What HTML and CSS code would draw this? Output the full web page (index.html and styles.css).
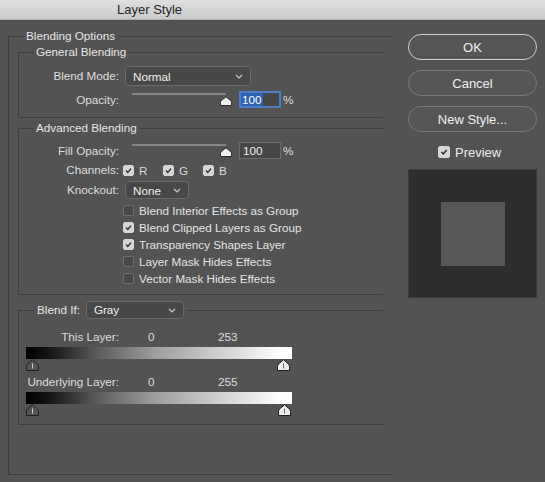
FILE: index.html
```html
<!DOCTYPE html>
<html lang="en">
<head>
    <meta charset="UTF-8">
    <title>Layer Style</title>
    <link rel="stylesheet" href="styles.css">
</head>
<body>
    <div class="titlebar"><span class="title">Layer Style</span></div>

    <div class="dialog">
        <fieldset class="group outer">
            <legend>Blending Options</legend>

            <fieldset class="group inner general">
                <legend>General Blending</legend>
                <div class="form">
                    <span class="lbl">Blend Mode:</span>
                    <div class="select mode">
                        <span>Normal</span>
                        <svg class="chev" width="8" height="5" viewBox="0 0 8 5"><path d="M1 1 L4 4 L7 1"/></svg>
                    </div>

                    <span class="lbl">Opacity:</span>
                    <div class="slider-row">
                        <div class="slider">
                            <div class="track"></div>
                            <svg class="knob" width="12" height="10" viewBox="0 0 12 10"><path d="M0.5 9.5 V6.5 Q0.5 5 2 4 L6 0.8 L10 4 Q11.5 5 11.5 6.5 V9.5 Z"/></svg>
                        </div>
                        <div class="num focused"><span class="sel">100</span></div>
                        <span class="pct">%</span>
                    </div>
                </div>
            </fieldset>

            <fieldset class="group inner advanced">
                <legend>Advanced Blending</legend>
                <div class="form">
                    <span class="lbl">Fill Opacity:</span>
                    <div class="slider-row">
                        <div class="slider">
                            <div class="track"></div>
                            <svg class="knob" width="12" height="10" viewBox="0 0 12 10"><path d="M0.5 9.5 V6.5 Q0.5 5 2 4 L6 0.8 L10 4 Q11.5 5 11.5 6.5 V9.5 Z"/></svg>
                        </div>
                        <div class="num">100</div>
                        <span class="pct">%</span>
                    </div>

                    <span class="lbl">Channels:</span>
                    <div class="channels">
                        <label class="chan"><span class="cb on"><svg width="11" height="11" viewBox="0 0 11 11"><path d="M2.5 5.5 L4.6 7.8 L8.6 3.2"/></svg></span>R</label>
                        <label class="chan"><span class="cb on"><svg width="11" height="11" viewBox="0 0 11 11"><path d="M2.5 5.5 L4.6 7.8 L8.6 3.2"/></svg></span>G</label>
                        <label class="chan"><span class="cb on"><svg width="11" height="11" viewBox="0 0 11 11"><path d="M2.5 5.5 L4.6 7.8 L8.6 3.2"/></svg></span>B</label>
                    </div>

                    <span class="lbl">Knockout:</span>
                    <div class="select knockout">
                        <span>None</span>
                        <svg class="chev" width="8" height="5" viewBox="0 0 8 5"><path d="M1 1 L4 4 L7 1"/></svg>
                    </div>

                    <div class="checks">
                        <label class="check"><span class="cb"></span>Blend Interior Effects as Group</label>
                        <label class="check"><span class="cb on"><svg width="11" height="11" viewBox="0 0 11 11"><path d="M2.5 5.5 L4.6 7.8 L8.6 3.2"/></svg></span>Blend Clipped Layers as Group</label>
                        <label class="check"><span class="cb on"><svg width="11" height="11" viewBox="0 0 11 11"><path d="M2.5 5.5 L4.6 7.8 L8.6 3.2"/></svg></span>Transparency Shapes Layer</label>
                        <label class="check"><span class="cb"></span>Layer Mask Hides Effects</label>
                        <label class="check"><span class="cb"></span>Vector Mask Hides Effects</label>
                    </div>
                </div>
            </fieldset>

            <fieldset class="group inner blendif">
                <legend>
                    <span>Blend If:</span>
                    <div class="select gray">
                        <span>Gray</span>
                        <svg class="chev" width="8" height="5" viewBox="0 0 8 5"><path d="M1 1 L4 4 L7 1"/></svg>
                    </div>
                </legend>

                <div class="range-row">
                    <span class="lbl">This Layer:</span>
                    <span class="val">0</span>
                    <span class="val">253</span>
                </div>
                <div class="ramp"></div>
                <div class="thumbs">
                    <svg class="thumb dark" width="13" height="12" viewBox="0 0 13 12"><path class="shape" d="M0.5 11.5 V7.5 Q0.5 5.8 2.2 4.5 L6.5 0.8 L10.8 4.5 Q12.5 5.8 12.5 7.5 V11.5 Z"/><path class="tick" d="M6.5 4.5 V9.5"/></svg>
                    <svg class="thumb light" style="margin-right: 2px" width="13" height="12" viewBox="0 0 13 12"><path class="shape" d="M0.5 11.5 V7.5 Q0.5 5.8 2.2 4.5 L6.5 0.8 L10.8 4.5 Q12.5 5.8 12.5 7.5 V11.5 Z"/><path class="tick" d="M6.5 4.5 V9.5"/></svg>
                </div>

                <div class="range-row second">
                    <span class="lbl">Underlying Layer:</span>
                    <span class="val">0</span>
                    <span class="val">255</span>
                </div>
                <div class="ramp"></div>
                <div class="thumbs">
                    <svg class="thumb dark" width="13" height="12" viewBox="0 0 13 12"><path class="shape" d="M0.5 11.5 V7.5 Q0.5 5.8 2.2 4.5 L6.5 0.8 L10.8 4.5 Q12.5 5.8 12.5 7.5 V11.5 Z"/><path class="tick" d="M6.5 4.5 V9.5"/></svg>
                    <svg class="thumb light" style="margin-right: 1px" width="13" height="12" viewBox="0 0 13 12"><path class="shape" d="M0.5 11.5 V7.5 Q0.5 5.8 2.2 4.5 L6.5 0.8 L10.8 4.5 Q12.5 5.8 12.5 7.5 V11.5 Z"/><path class="tick" d="M6.5 4.5 V9.5"/></svg>
                </div>
            </fieldset>
        </fieldset>

        <div class="side">
            <button class="btn default">OK</button>
            <button class="btn">Cancel</button>
            <button class="btn">New Style...</button>

            <label class="preview-toggle">
                <span class="cb on big"><svg width="12" height="12" viewBox="0 0 12 12"><path d="M3 6 L5.1 8.4 L9.2 3.6"/></svg></span>Preview
            </label>

            <div class="preview">
                <div class="swatch"></div>
            </div>
        </div>
    </div>
</body>
</html>
```

FILE: styles.css
```css
* {
    box-sizing: border-box;
}
body {
    margin: 0;
    width: 545px;
    height: 482px;
    overflow: hidden;
    background: #535353;
    font-family: "Liberation Sans", Arial, sans-serif;
    font-size: 11.7px;
    color: #dedede;
}
.titlebar {
    height: 20px;
    background: linear-gradient(#dfdfdf, #cbcbcb);
    border-bottom: 1px solid #b0b0b0;
    color: #262626;
    font-size: 13px;
    line-height: 19px;
    padding-left: 117px;
}
.dialog {
    display: flex;
    align-items: flex-start;
}

/* group boxes */
.group {
    margin: 0;
    padding: 0;
    min-width: 0;
    border: 1px solid #3d3d3d;
    border-right: none;
}
.group > legend {
    padding: 0 3px;
    margin-left: 14px;
    line-height: 14px;
    color: #e6e6e6;
}
.outer {
    width: 385px;
    margin: 9px 0 0 8px;
    padding-bottom: 49px;
}
.inner {
    margin: 0 10px 0 9px;
}
.general {
    margin-top: 2px;
    padding: 7px 0 9px;
}
.advanced {
    margin-top: 3px;
    padding: 7px 0 7px;
}
.blendif {
    margin-top: 6px;
    padding: 11px 0 8px;
}

/* form grid */
.form {
    display: grid;
    grid-template-columns: 100px 1fr;
    column-gap: 4px;
    row-gap: 3px;
    align-items: center;
}
.general .form {
    row-gap: 5px;
}
.lbl {
    text-align: right;
    line-height: 14px;
}

/* dropdowns */
.select {
    display: flex;
    align-items: center;
    justify-content: space-between;
    margin-left: 2px;
    padding: 0 7px 0 7px;
    background: #474747;
    border: 1px solid #6a6a6a;
    border-radius: 4px;
    color: #f0f0f0;
}
.select.mode {
    width: 126px;
    height: 20px;
}
.select.knockout {
    width: 64px;
    height: 18px;
}
.select.gray {
    width: 98px;
    height: 18px;
    margin-left: 6px;
}
.chev {
    fill: none;
    stroke: #cfcfcf;
    stroke-width: 1.1;
}

/* sliders */
.slider-row {
    display: flex;
    align-items: flex-start;
    height: 17px;
}
.slider {
    position: relative;
    width: 94px;
    height: 17px;
    margin-left: 9px;
}
.track {
    margin-top: 2px;
    height: 2px;
    background: #858585;
}
.knob {
    position: absolute;
    right: -6px;
    top: 5px;
    fill: #f2f2f2;
    stroke: #2c2c2c;
    stroke-width: 1;
}
.num {
    width: 42px;
    height: 17px;
    margin-left: 13px;
    padding-left: 3px;
    background: #464646;
    border: 1px solid #6c6c6c;
    color: #f0f0f0;
    line-height: 15px;
}
.num.focused {
    border: 2px solid #4c7fc8;
    padding-left: 0;
    line-height: 13px;
}
.num .sel {
    display: inline-block;
    padding: 0 1px;
    background: #2d63b5;
    color: #fff;
}
.pct {
    margin-left: 2px;
    line-height: 17px;
}

/* checkboxes */
.cb {
    display: inline-flex;
    align-items: center;
    justify-content: center;
    width: 11px;
    height: 11px;
    border: 1px solid #6e6e6e;
    border-radius: 2px;
    background: #474747;
    flex-shrink: 0;
}
.cb.on {
    background: #d6d6d6;
    border-color: #d6d6d6;
}
.cb svg {
    fill: none;
    stroke: #2a2a2a;
    stroke-width: 1.7;
}
.cb.big {
    width: 12px;
    height: 12px;
}
.channels {
    display: flex;
    height: 16px;
    align-items: center;
}
.chan {
    display: flex;
    align-items: center;
    gap: 5px;
    width: 40px;
}
.checks {
    grid-column: 2;
    display: flex;
    flex-direction: column;
}
.check {
    display: flex;
    align-items: center;
    gap: 5px;
    height: 17px;
    color: #e4e4e4;
}

/* blend if */
.blendif > legend {
    display: flex;
    align-items: center;
    margin-left: 15px;
}
.range-row {
    display: flex;
    line-height: 14px;
}
.range-row .lbl {
    width: 100px;
    margin-right: 29px;
}
.range-row .val {
    width: 70px;
}
.range-row.second {
    margin-top: 4px;
}
.ramp {
    width: 266px;
    height: 12px;
    margin: 3px 0 0 7px;
    background: linear-gradient(to right, #000 0%, #151515 9%, #5c5c5c 27%, #9c9c9c 48%, #d2d2d2 74%, #fdfdfd 95%, #fff 100%);
}
.thumbs {
    display: flex;
    justify-content: space-between;
    width: 266px;
    height: 12px;
    margin-left: 7px;
}
.thumb .shape {
    stroke: #1e1e1e;
    stroke-width: 1;
}
.thumb .tick {
    stroke-width: 1;
}
.thumb.dark .shape {
    fill: #555;
}
.thumb.dark .tick {
    stroke: #d0d0d0;
}
.thumb.light .shape {
    fill: #eeeeee;
}
.thumb.light .tick {
    stroke: #6a6a6a;
}

/* right column */
.side {
    display: flex;
    flex-direction: column;
    width: 129px;
    margin: 14px 0 0 15px;
}
.btn {
    height: 26px;
    margin-bottom: 10px;
    background: #555;
    border: 1px solid #787878;
    border-radius: 13px;
    color: #f0f0f0;
    font-family: "Liberation Sans", Arial, sans-serif;
    font-size: 13px;
}
.btn.default {
    border-color: #cfcfcf;
}
.preview-toggle {
    display: flex;
    align-items: center;
    gap: 5px;
    height: 14px;
    margin-top: 3px;
    padding-left: 30px;
    font-size: 13px;
    color: #ececec;
}
.preview {
    display: flex;
    align-items: center;
    justify-content: center;
    width: 129px;
    height: 129px;
    margin-top: 10px;
    background: #2d2d2d;
    border: 1px solid #3a3a3a;
}
.swatch {
    width: 64px;
    height: 64px;
    background: #575757;
}
```
